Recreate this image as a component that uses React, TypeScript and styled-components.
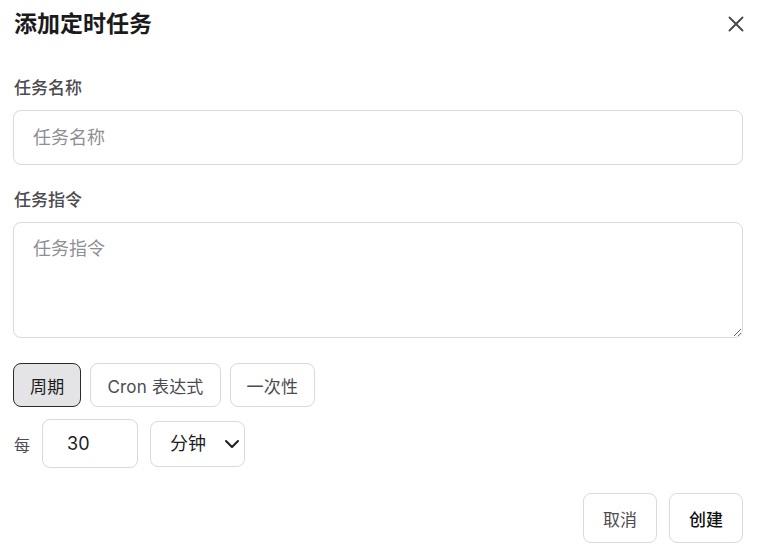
import { useState } from 'react';
import styled, { createGlobalStyle } from 'styled-components';
import { ChevronDown } from 'lucide-react';

const font = `Inter, "Noto Sans CJK SC", "Noto Sans", sans-serif`;

const Global = createGlobalStyle`
	body {
		margin: 0;
		background: #ffffff;
		font-family: ${font};
	}
`;

const Dialog = styled.div`
	width: 759px;
	height: 556px;
	box-sizing: border-box;
	padding: 10px 16px 0 13px;
	display: flex;
	flex-direction: column;
	background: #ffffff;
`;

const Header = styled.div`
	display: flex;
	align-items: center;
	justify-content: space-between;
	height: 28px;
	margin-bottom: 38px;
`;

const Title = styled.h2`
	margin: 0 0 0 1px;
	font-size: 23px;
	font-weight: 700;
	line-height: 28px;
	color: #1b1b1d;
`;

const CloseBtn = styled.button`
	border: none;
	background: none;
	padding: 0;
	width: 18px;
	height: 18px;
	margin-right: -2px;
	display: flex;
	align-items: center;
	justify-content: center;
	color: #4a4a4f;
	cursor: pointer;
`;

const Label = styled.label`
	display: block;
	margin: 0 0 10px 1px;
	font-size: 17px;
	font-weight: 500;
	line-height: 24px;
	color: #4b4b50;
`;

const Field = styled.div<{ $gap: number }>`
	margin-bottom: ${(p) => p.$gap}px;
`;

const TextInput = styled.input`
	width: 100%;
	box-sizing: border-box;
	height: 55px;
	padding: 0 19px;
	border: 1px solid #d9d9de;
	border-radius: 8px;
	font-family: ${font};
	font-size: 18px;
	color: #222;
	background: #fff;
	outline: none;
	caret-color: #111;

	&::placeholder {
		color: #8e8e93;
	}
`;

const TextArea = styled.textarea`
	display: block;
	width: 100%;
	box-sizing: border-box;
	height: 116px;
	padding: 13px 19px;
	border: 1px solid #d9d9de;
	border-radius: 8px;
	font-family: ${font};
	font-size: 18px;
	line-height: 26px;
	color: #222;
	outline: none;

	&::placeholder {
		color: #8e8e93;
	}
`;

const Segments = styled.div`
	display: flex;
	gap: 9px;
	margin-bottom: 12px;
`;

const SegBtn = styled.button<{ $active?: boolean }>`
	height: 44px;
	padding: 0 16px;
	border-radius: 8px;
	border: 1px solid ${(p) => (p.$active ? '#2b2b2e' : '#d9d9de')};
	background: ${(p) => (p.$active ? '#e4e4e7' : '#ffffff')};
	font-family: ${font};
	font-size: 17px;
	letter-spacing: 0.2px;
	color: ${(p) => (p.$active ? '#1d1d20' : '#4b4b50')};
	cursor: pointer;
`;

const EveryRow = styled.div`
	display: flex;
	align-items: center;
	gap: 12px;
	margin-bottom: 25px;
`;

const EveryText = styled.span`
	font-size: 16px;
	color: #4b4b50;
	margin-left: 1px;
	margin-right: 0;
`;

const NumInput = styled.input`
	width: 96px;
	height: 49px;
	box-sizing: border-box;
	padding: 0 24px;
	border: 1px solid #d9d9de;
	border-radius: 8px;
	font-family: ${font};
	font-size: 18px;
	color: #1d1d20;
	outline: none;
`;

const SelectWrap = styled.div`
	position: relative;
	width: 95px;
	height: 46px;

	svg {
		position: absolute;
		right: 1px;
		top: 11px;
		pointer-events: none;
		color: #1d1d20;
	}
`;

const Select = styled.select`
	appearance: none;
	width: 100%;
	height: 100%;
	box-sizing: border-box;
	padding: 0 0 0 19px;
	border: 1px solid #d9d9de;
	border-radius: 8px;
	background: #fff;
	font-family: ${font};
	font-size: 18px;
	color: #1d1d20;
	outline: none;
`;

const Footer = styled.div`
	display: flex;
	justify-content: flex-end;
	gap: 12px;
`;

const FootBtn = styled.button<{ $primary?: boolean }>`
	width: 74px;
	height: 50px;
	border: 1px solid #d9d9de;
	border-radius: 8px;
	background: #fff;
	font-family: ${font};
	font-size: 17px;
	font-weight: ${(p) => (p.$primary ? 500 : 400)};
	color: ${(p) => (p.$primary ? '#111113' : '#4b4b50')};
	cursor: pointer;
`;

export default function App() {
	const [mode, setMode] = useState('周期');
	const modes = ['周期', 'Cron 表达式', '一次性'];

	return (
		<>
			<Global />
			<Dialog>
				<Header>
					<Title>添加定时任务</Title>
					<CloseBtn aria-label="关闭">
						<svg width="16" height="16" viewBox="0 0 16 16" fill="none" stroke="currentColor" strokeWidth="1.9" strokeLinecap="round">
							<path d="M1.5 1.5 14.5 14.5" />
							<path d="M14.5 1.5 1.5 14.5" />
						</svg>
					</CloseBtn>
				</Header>

				<Field $gap={23}>
					<Label>任务名称</Label>
					<TextInput placeholder="任务名称" autoFocus />
				</Field>

				<Field $gap={25}>
					<Label>任务指令</Label>
					<TextArea placeholder="任务指令" />
				</Field>

				<Segments>
					{modes.map((m) => (
						<SegBtn key={m} $active={m === mode} onClick={() => setMode(m)}>
							{m}
						</SegBtn>
					))}
				</Segments>

				<EveryRow>
					<EveryText>每</EveryText>
					<NumInput defaultValue="30" />
					<SelectWrap>
						<Select defaultValue="分钟">
							<option>分钟</option>
							<option>小时</option>
							<option>天</option>
						</Select>
						<ChevronDown size={24} strokeWidth={2} />
					</SelectWrap>
				</EveryRow>

				<Footer>
					<FootBtn>取消</FootBtn>
					<FootBtn $primary>创建</FootBtn>
				</Footer>
			</Dialog>
		</>
	);
}
